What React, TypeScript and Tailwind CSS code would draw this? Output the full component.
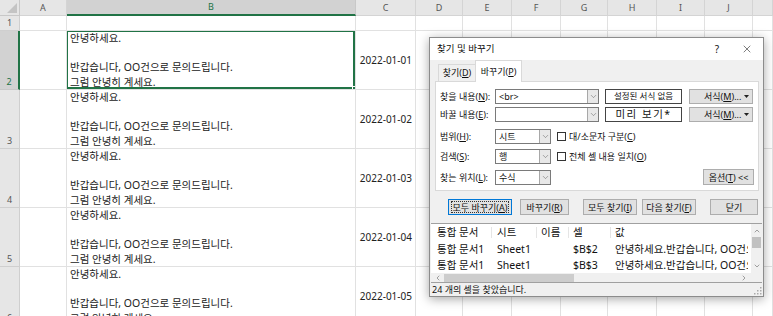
import { X, ChevronDown, ChevronUp, ChevronLeft, ChevronRight } from 'lucide-react';

const COLS = ['', 'A', 'B', 'C', 'D', 'E', 'F', 'G', 'H', 'I', 'J', ''];
const ROWS = [1, 2, 3, 4, 5, 6];

function Mn({ children }: { children: string }) {
  return <span className="underline underline-offset-[1px]">{children}</span>;
}

function CellText() {
  return (
    <div className="pl-[3px] text-[10.5px] leading-[14.6px] text-[#222] whitespace-nowrap">
      <div>안녕하세요.</div>
      <div>&nbsp;</div>
      <div>반갑습니다, OO건으로 문의드립니다.</div>
      <div>그럼 안녕히 계세요.</div>
    </div>
  );
}

function Sheet() {
  return (
    <div className="grid grid-cols-[20px_47px_289px_60px_47px_49px_49px_47px_49px_48px_48px_1fr] grid-rows-[16px_15px_59px_59px_59px_59px_59px]">
      {COLS.map((c, i) => {
        if (i === 0)
          return (
            <div key={'h' + i} className="relative border-r border-b border-[#c8c8c8] bg-[#e6e6e6]">
              <svg className="absolute right-[2px] bottom-[2px]" width="10" height="10" viewBox="0 0 10 10">
                <polygon points="10,0 10,10 0,10" fill="#c4c4c4" />
              </svg>
            </div>
          );
        const sel = c === 'B';
        return (
          <div
            key={'h' + i}
            className={
              sel
                ? 'flex items-center justify-center border-r border-[#c8c8c8] border-b-2 border-b-[#217346] bg-[#d2d2d2] text-[9px] text-[#217346]'
                : 'flex items-center justify-center border-r border-b border-[#d4d4d4] bg-[#e6e6e6] text-[9px] text-[#555]'
            }
          >
            {c}
          </div>
        );
      })}
      {ROWS.map((r) =>
        COLS.map((c, i) => {
          if (i === 0) {
            const sel = r === 2;
            return (
              <div
                key={r + '-' + i}
                className={
                  sel
                    ? 'flex items-end justify-center pb-[1px] border-b border-[#c8c8c8] border-r-2 border-r-[#217346] bg-[#d2d2d2] text-[9px] text-[#217346]'
                    : 'flex items-end justify-center pb-[1px] border-b border-r border-[#cfcfcf] bg-[#e6e6e6] text-[9px] text-[#555]'
                }
              >
                {r}
              </div>
            );
          }
          if (c === 'B' && r >= 2) {
            return (
              <div key={r + '-' + i} className="relative overflow-hidden border-r border-b border-[#e1e1e1]">
                <CellText />
                {r === 2 && (
                  <>
                    <div className="absolute -left-px -top-px right-0 bottom-0 border-2 border-[#217346]" />
                    <div className="absolute -right-[3px] -bottom-[3px] h-[6px] w-[6px] border border-white bg-[#217346]" />
                  </>
                )}
              </div>
            );
          }
          if (c === 'C' && r >= 2) {
            return (
              <div
                key={r + '-' + i}
                className="flex items-center justify-end pr-[3px] border-r border-b border-[#e1e1e1] text-[10px] text-[#222]"
              >
                2022-01-0{r - 1}
              </div>
            );
          }
          return <div key={r + '-' + i} className="border-r border-b border-[#e1e1e1]" />;
        })
      )}
    </div>
  );
}

function Combo({ value, w }: { value?: string; w: string }) {
  return (
    <div className={`flex h-[15px] ${w} items-stretch border border-[#7a7a7a] bg-white`}>
      <div className="flex flex-1 items-center pl-[3px] text-[9px] leading-none">{value}</div>
      <div className="flex w-[11px] items-center justify-center border-l border-[#a8a8a8] bg-[#e8e8e8]">
        <ChevronDown size={9} strokeWidth={1.3} color="#555" />
      </div>
    </div>
  );
}

function Btn({ children, w, focus }: { children: React.ReactNode; w: string; focus?: boolean }) {
  return (
    <div
      className={`flex h-[16px] ${w} items-center justify-center border ${
        focus ? 'border-[#0078d7]' : 'border-[#adadad]'
      } bg-[#e1e1e1] text-[9px] leading-none`}
    >
      {focus ? (
        <div className="flex h-[12px] w-[calc(100%-4px)] items-center justify-center border border-dotted border-[#333]">
          {children}
        </div>
      ) : (
        children
      )}
    </div>
  );
}

function FormatBtn() {
  return (
    <div className="flex h-[15px] w-[64px] items-center border border-[#adadad] bg-[#e1e1e1] pl-[14px] pr-[3px] text-[9px] leading-none">
      <span className="flex-1">
        서식(<Mn>M</Mn>)...
      </span>
      <svg width="5" height="3" viewBox="0 0 5 3">
        <polygon points="0,0 5,0 2.5,3" fill="#222" />
      </svg>
    </div>
  );
}

function Check({ children }: { children: React.ReactNode }) {
  return (
    <div className="ml-[6px] flex items-center text-[9px] leading-none">
      <div className="mr-[3px] h-[9px] w-[9px] border border-[#333] bg-white" />
      {children}
    </div>
  );
}

function Dialog() {
  return (
    <div className="absolute left-[429px] top-[37px] flex h-[260px] w-[335px] flex-col border border-[#8c8c8c] bg-[#f0f0f0] text-[#111] shadow-[0_2px_10px_rgba(0,0,0,0.35)]">
      <div className="flex h-[22px] items-center bg-white pl-[7px] pr-[10px] text-[9.5px]">
        <span className="flex-1">찾기 및 바꾸기</span>
        <span className="mr-[22px] text-[10px]">?</span>
        <X size={12} strokeWidth={1.1} />
      </div>
      <div className="px-[5px]">
        <div className="flex h-[21px] items-end">
          <div className="ml-[3px] flex h-[17px] w-[38px] items-center justify-center border border-b-0 border-[#d9d9d9] bg-[#f0f0f0] text-[9px]">
            찾기(<Mn>D</Mn>)
          </div>
          <div className="relative z-10 -mb-px -ml-px flex h-[22px] w-[47px] items-center justify-center border border-b-0 border-[#d9d9d9] bg-white text-[9px]">
            바꾸기(<Mn>P</Mn>)
          </div>
        </div>
        <div className="h-[110px] w-[324px] border border-[#d9d9d9] bg-white pl-[4px] pt-[7px]">
          <div className="flex items-center">
            <div className="w-[55px] text-[9px] leading-none">
              찾을 내용(<Mn>N</Mn>):
            </div>
            <Combo value="<br>" w="w-[104px]" />
            <div className="ml-[6px] flex h-[15px] w-[77px] items-center justify-center border border-[#444] bg-white text-[8.5px] leading-none">
              설정된 서식 없음
            </div>
            <div className="ml-[7px]">
              <FormatBtn />
            </div>
          </div>
          <div className="mt-[3px] flex items-center">
            <div className="w-[55px] text-[9px] leading-none">
              바꿀 내용(<Mn>E</Mn>):
            </div>
            <Combo w="w-[104px]" />
            <div className="ml-[6px] flex h-[15px] w-[77px] items-center justify-center border border-[#444] bg-white text-[10.5px] leading-none tracking-[1.5px]">
              미리 보기*
            </div>
            <div className="ml-[7px]">
              <FormatBtn />
            </div>
          </div>
          <div className="mt-[7px] flex items-center">
            <div className="w-[55px] text-[9px] leading-none">
              범위(<Mn>H</Mn>):
            </div>
            <Combo value="시트" w="w-[56px]" />
            <Check>
              대/소문자 구분(<Mn>C</Mn>)
            </Check>
          </div>
          <div className="mt-[5px] flex items-center">
            <div className="w-[55px] text-[9px] leading-none">
              검색(<Mn>S</Mn>):
            </div>
            <Combo value="행" w="w-[56px]" />
            <Check>
              전체 셀 내용 일치(<Mn>O</Mn>)
            </Check>
          </div>
          <div className="mt-[5px] flex items-center">
            <div className="w-[55px] text-[9px] leading-none">
              찾는 위치(<Mn>L</Mn>):
            </div>
            <Combo value="수식" w="w-[56px]" />
            <div className="ml-auto mr-[4px] flex h-[16px] w-[51px] items-center justify-center border border-[#adadad] bg-[#e1e1e1] text-[9px] leading-none">
              옵션(<Mn>T</Mn>)&nbsp;&lt;&lt;
            </div>
          </div>
        </div>
      </div>
      <div className="mt-[8px] flex pl-[18px]">
        <Btn w="w-[64px]" focus>
          모두 바꾸기(<Mn>A</Mn>)
        </Btn>
        <div className="ml-[8px]">
          <Btn w="w-[49px]">
            바꾸기(<Mn>R</Mn>)
          </Btn>
        </div>
        <div className="ml-[14px]">
          <Btn w="w-[54px]">
            모두 찾기(<Mn>I</Mn>)
          </Btn>
        </div>
        <div className="ml-[5px]">
          <Btn w="w-[54px]">
            다음 찾기(<Mn>F</Mn>)
          </Btn>
        </div>
        <div className="ml-[14px]">
          <Btn w="w-[48px]">닫기</Btn>
        </div>
      </div>
      <div className="mx-px mt-[8px] flex h-[60px] flex-col border-y border-[#a0a0a0] bg-white">
        <div className="flex flex-1">
          <div className="flex-1 overflow-hidden text-[10.5px] leading-none">
            <div className="flex h-[17px] items-center">
              <div className="w-[61px] border-r border-[#e5e5e5] pl-[6px]">통합 문서</div>
              <div className="w-[45px] border-r border-[#e5e5e5] pl-[5px]">시트</div>
              <div className="w-[32px] border-r border-[#e5e5e5] pl-[4px]">이름</div>
              <div className="w-[42px] border-r border-[#e5e5e5] pl-[4px]">셀</div>
              <div className="pl-[4px]">값</div>
            </div>
            {['2', '3'].map((n) => (
              <div key={n} className="flex h-[16px] items-center whitespace-nowrap">
                <div className="w-[61px] pl-[6px]">통합 문서1</div>
                <div className="w-[45px] pl-[5px]">Sheet1</div>
                <div className="w-[32px]" />
                <div className="w-[42px] pl-[4px]">$B${n}</div>
                <div className="w-[137px] overflow-hidden pl-[4px]">
                  안녕하세요.반갑습니다, OO건으로 문의드립니다.그럼 안녕히 계세요.
                </div>
              </div>
            ))}
          </div>
          <div className="flex w-[11px] flex-col items-center bg-[#f0f0f0]">
            <ChevronUp size={8} strokeWidth={1.6} color="#555" className="mt-[3px]" />
            <div className="mt-[2px] h-[11px] w-[9px] bg-[#c1c1c1]" />
            <div className="flex-1" />
            <ChevronDown size={8} strokeWidth={1.6} color="#555" className="mb-[3px]" />
          </div>
        </div>
        <div className="flex h-[9px] items-center bg-[#f0f0f0]">
          <ChevronLeft size={8} strokeWidth={1.6} color="#555" className="ml-[3px]" />
          <div className="ml-[2px] h-[8px] w-[130px] bg-[#cdcdcd]" />
          <div className="flex-1" />
          <ChevronRight size={8} strokeWidth={1.6} color="#555" className="mr-[14px]" />
        </div>
      </div>
      <div className="relative flex flex-1 items-center pl-[2px] text-[9px] leading-none">
        24 개의 셀을 찾았습니다.
        <svg className="absolute right-[1px] bottom-[1px]" width="8" height="8" viewBox="0 0 8 8">
          <rect x="6" y="0" width="1.5" height="1.5" fill="#aaa" />
          <rect x="3" y="3" width="1.5" height="1.5" fill="#aaa" />
          <rect x="6" y="3" width="1.5" height="1.5" fill="#aaa" />
          <rect x="0" y="6" width="1.5" height="1.5" fill="#aaa" />
          <rect x="3" y="6" width="1.5" height="1.5" fill="#aaa" />
          <rect x="6" y="6" width="1.5" height="1.5" fill="#aaa" />
        </svg>
      </div>
    </div>
  );
}

export default function App() {
  return (
    <div className="relative h-[316px] w-[773px] overflow-hidden bg-white font-['Noto_Sans','Noto_Sans_CJK_KR',sans-serif]">
      <Sheet />
      <Dialog />
    </div>
  );
}
